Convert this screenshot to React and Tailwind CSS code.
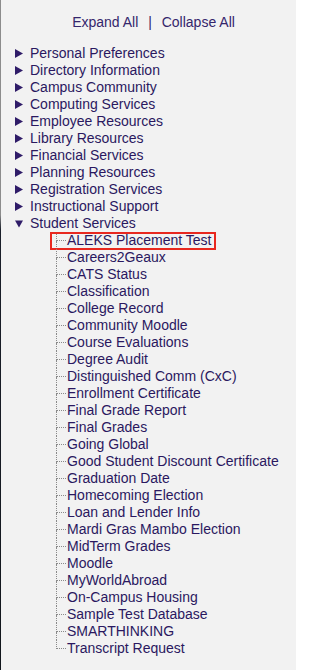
import React from 'react';

const sections = [
  'Personal Preferences',
  'Directory Information',
  'Campus Community',
  'Computing Services',
  'Employee Resources',
  'Library Resources',
  'Financial Services',
  'Planning Resources',
  'Registration Services',
  'Instructional Support',
];

const studentServices = [
  'ALEKS Placement Test',
  'Careers2Geaux',
  'CATS Status',
  'Classification',
  'College Record',
  'Community Moodle',
  'Course Evaluations',
  'Degree Audit',
  'Distinguished Comm (CxC)',
  'Enrollment Certificate',
  'Final Grade Report',
  'Final Grades',
  'Going Global',
  'Good Student Discount Certificate',
  'Graduation Date',
  'Homecoming Election',
  'Loan and Lender Info',
  'Mardi Gras Mambo Election',
  'MidTerm Grades',
  'Moodle',
  'MyWorldAbroad',
  'On-Campus Housing',
  'Sample Test Database',
  'SMARTHINKING',
  'Transcript Request',
];

function Arrow({ open }) {
  return (
    <svg width="8" height="9" viewBox="0 0 8 9" className="shrink-0">
      {open ? <path d="M0 1.5 H8 L4 8.5 Z" fill="#2f1c68" /> : <path d="M0 0 L8 4.5 L0 9 Z" fill="#2f1c68" />}
    </svg>
  );
}

function Section({ label, open, children }) {
  return (
    <li>
      <div className="flex items-center h-[17px] pl-[14px] gap-[7px]">
        <Arrow open={open} />
        <span>{label}</span>
      </div>
      {children}
    </li>
  );
}

function Leaf({ label, last, boxed }) {
  return (
    <li className="flex h-[17px] relative">
      <div className="w-[10px] flex flex-col shrink-0">
        <div className="h-[9px] border-l border-b border-dotted border-[#8a8a8a]"></div>
        <div className={`flex-1 ${last ? '' : 'border-l border-dotted border-[#8a8a8a]'}`}></div>
      </div>
      <span className="pl-[1px] leading-[17px] whitespace-nowrap">{label}</span>
      {boxed && (
        <div className="absolute left-[-6px] top-0 w-[166px] h-[18px] border-2 border-[#e8281f]"></div>
      )}
    </li>
  );
}

export default function App() {
  return (
    <div className="flex w-[296px] h-[670px] bg-[#f2f2f2] text-[14px] text-[#2a1860] font-['Liberation_Sans',Arial,sans-serif] overflow-hidden">
      <div className="w-px shrink-0 bg-[linear-gradient(to_bottom,#8c8c8c_0px,#8c8c8c_215px,#1a1f2a_230px,#12161c_100%)]"></div>

      <div className="flex-1 pt-[14px]">
        <div className="h-[17px] leading-[17px] text-center pl-[10px] text-[#35266c]">
          Expand All <span className="px-[6px]">|</span> Collapse All
        </div>

        <ul className="mt-[14px] leading-[17px]">
          {sections.map(s => (
            <Section key={s} label={s} />
          ))}
          <Section label="Student Services" open>
            <ul className="ml-[55px]">
              {studentServices.map((s, i) => (
                <Leaf key={s} label={s} last={i === studentServices.length - 1} boxed={i === 0} />
              ))}
            </ul>
          </Section>
        </ul>
      </div>
    </div>
  );
}
